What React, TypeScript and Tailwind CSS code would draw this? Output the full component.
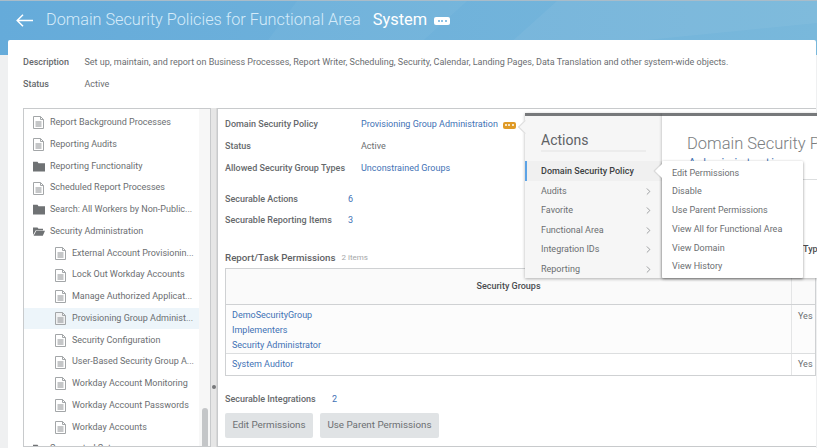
import { ChevronRight } from "lucide-react";
import React from "react";

const DocIcon = ({ filled }: { filled?: boolean }) => (
  <svg width="11" height="13" viewBox="0 0 11 13" className="shrink-0">
    <path
      d="M.5.5h7l3 3v9H.5z"
      fill={filled ? "#f0f1f2" : "#fff"}
      stroke="#a3a6a8"
      strokeWidth="1"
    />
    <path d="M7.5.5v3h3" fill="none" stroke="#a3a6a8" />
    <path d="M2.5 6h6M2.5 8h6M2.5 10h6" stroke="#8b8e91" strokeWidth="1" />
  </svg>
);

const FolderIcon = ({ open }: { open?: boolean }) => (
  <svg width="12" height="11" viewBox="0 0 12 11" className="shrink-0 -mx-[0.5px]">
    {open ? (
      <path d="M0 1.5h4.5l1 1.2H10V4.2H2.8L0 9zM3.3 4.8H12L9.8 9.8H.6z" fill="#6f7274" />
    ) : (
      <path d="M0 .8h4.5l1 1.4H12V10.5H0z" fill="#6f7274" />
    )}
  </svg>
);

const Dots = ({ className }: { className: string }) => (
  <span className={`flex items-center justify-center gap-[1.5px] rounded-[2px] shrink-0 ${className}`}>
    <i className="w-[2px] h-[2px] rounded-full bg-current" />
    <i className="w-[2px] h-[2px] rounded-full bg-current" />
    <i className="w-[2px] h-[2px] rounded-full bg-current" />
  </span>
);

const treeItems = [
  { label: "Report Background Processes", kind: "doc" },
  { label: "Reporting Audits", kind: "doc" },
  { label: "Reporting Functionality", kind: "folder" },
  { label: "Scheduled Report Processes", kind: "doc" },
  { label: "Search: All Workers by Non-Public...", kind: "folder" },
  { label: "Security Administration", kind: "open" },
  { label: "External Account Provisionin...", kind: "doc", child: true },
  { label: "Lock Out Workday Accounts", kind: "doc", child: true },
  { label: "Manage Authorized Applicat...", kind: "doc", child: true },
  { label: "Provisioning Group Administ...", kind: "doc", child: true, active: true },
  { label: "Security Configuration", kind: "doc", child: true },
  { label: "User-Based Security Group A...", kind: "doc", child: true },
  { label: "Workday Account Monitoring", kind: "doc", child: true },
  { label: "Workday Account Passwords", kind: "doc", child: true },
  { label: "Workday Accounts", kind: "doc", child: true },
  { label: "Segmented Setup", kind: "folder" },
];

const menuItems = ["Audits", "Favorite", "Functional Area", "Integration IDs", "Reporting"];
const subItems = [
  "Edit Permissions",
  "Disable",
  "Use Parent Permissions",
  "View All for Functional Area",
  "View Domain",
  "View History",
];

const Tree = () => (
  <div className="w-[188px] h-[339px] shrink-0 border border-[#c8cacc] flex overflow-hidden">
    <div className="w-[175px] pt-[2.5px] shrink-0">
      {treeItems.map((item) => (
        <div
          key={item.label}
          className={`h-[21.75px] flex items-center gap-[6px] whitespace-nowrap ${
            item.child ? "pl-[31px]" : "pl-[9px]"
          } ${item.active ? "bg-[#edf5fa]" : ""}`}
        >
          {item.kind === "doc" && <DocIcon filled={item.active} />}
          {item.kind === "folder" && <FolderIcon />}
          {item.kind === "open" && <FolderIcon open />}
          <span>{item.label}</span>
        </div>
      ))}
    </div>
    <div className="flex-1 bg-[#f7f7f7] flex flex-col justify-end items-center">
      <div className="w-[6px] h-[38px] rounded-t-[3px] bg-[#c4c6c8]" />
    </div>
  </div>
);

const Details = () => (
  <div className="flex-1 min-w-0 h-[339px] border-t border-l border-b border-[#c8cacc] pl-[7px] pt-[5px] overflow-hidden">
    <div className="h-[21.7px] flex items-center">
      <span className="w-[136px] font-medium text-[#66696c]">Domain Security Policy</span>
      <span className="text-[#3f72b5]">Provisioning Group Administration</span>
      <Dots className="ml-[5px] w-[13px] h-[7px] bg-[#df9a27] text-white" />
    </div>
    <div className="h-[21.7px] flex items-center">
      <span className="w-[136px] font-medium text-[#66696c]">Status</span>
      <span>Active</span>
    </div>
    <div className="h-[21.7px] flex items-center">
      <span className="w-[136px] font-medium text-[#66696c]">Allowed Security Group Types</span>
      <span className="text-[#3f72b5]">Unconstrained Groups</span>
    </div>
    <div className="mt-[9px] h-[21.7px] flex items-center">
      <span className="w-[123px] font-medium text-[#66696c]">Securable Actions</span>
      <span className="text-[#3f72b5]">6</span>
    </div>
    <div className="h-[21.7px] flex items-center">
      <span className="w-[123px] font-medium text-[#66696c]">Securable Reporting Items</span>
      <span className="text-[#3f72b5]">3</span>
    </div>
    <div className="mt-[16px] h-[20px] flex items-center gap-[6px]">
      <span className="text-[9.75px] font-medium text-[#5f6265]">Report/Task Permissions</span>
      <span className="text-[8px] text-[#a5a7a9]">2 items</span>
    </div>
    <div className="border border-[#cfd1d3]">
      <div className="flex h-[36.5px] bg-[#fafafa] border-b border-[#cfd1d3]">
        <div className="w-[565px] flex items-center justify-center font-medium text-[#4a4d50]">
          Security Groups
        </div>
        <div className="flex-1 border-l border-[#e4e5e6]" />
      </div>
      <div className="flex h-[49px] border-b border-[#dcdedf] bg-[#fcfcfc]">
        <div className="w-[565px] pl-[6px] pt-[3px] text-[#3f72b5] leading-[15px]">
          <div>DemoSecurityGroup</div>
          <div>Implementers</div>
          <div>Security Administrator</div>
        </div>
        <div className="flex-1 border-l border-[#e4e5e6] pl-[6px] pt-[4px] leading-[15px]">Yes</div>
      </div>
      <div className="flex h-[21px]">
        <div className="w-[565px] pl-[6px] pt-[3px] text-[#3f72b5] leading-[15px]">System Auditor</div>
        <div className="flex-1 border-l border-[#e4e5e6] pl-[6px] pt-[3px] leading-[15px]">Yes</div>
      </div>
    </div>
    <div className="mt-[13.5px] flex items-center h-[20px]">
      <span className="w-[107px] font-medium text-[#66696c]">Securable Integrations</span>
      <span className="text-[#3f72b5]">2</span>
    </div>
    <div className="mt-[3px] flex gap-[7px]">
      <button className="w-[88px] h-[25px] rounded-[2px] bg-[#e0e3e5] text-[9.8px] text-[#6d7073]">Edit Permissions</button>
      <button className="w-[119px] h-[25px] rounded-[2px] bg-[#e0e3e5] text-[9.8px] text-[#6d7073]">Use Parent Permissions</button>
    </div>
  </div>
);

const ActionsMenu = () => (
  <div className="absolute left-[525px] top-[113px] w-[292px] h-[165px] flex">
    <div className="relative w-[137px] h-full bg-[#f6f6f6] border-t-[3px] border-[#77797b] shadow-[0_1px_3px_rgba(0,0,0,0.3)]">
      <div className="absolute -left-[5px] top-[6px] w-[10px] h-[10px] rotate-45 bg-[#f6f6f6] border-l border-b border-[#dddddd]" />
      <div className="relative mx-[16px] mt-[14px] border-b-2 border-[#ececec] text-[14px] text-[#5f6265] leading-[20px]">
        Actions
      </div>
      <div className="relative mt-[9px] h-[20px] pt-[2px] pl-[14px] flex items-center bg-[#f0f0f0] border-l-[2px] border-[#5ca3e6] font-medium text-[#3c3f42]">
        Domain Security Policy
      </div>
      {menuItems.map((m) => (
        <div key={m} className="h-[19.5px] pt-[1px] pl-[16px] pr-[8px] flex items-center justify-between">
          <span>{m}</span>
          <ChevronRight size={11} strokeWidth={1.2} className="text-[#55585b]" />
        </div>
      ))}
    </div>
    <div className="relative flex-1 h-full bg-white border-t-[3px] border-[#77797b] shadow-[0_1px_3px_rgba(0,0,0,0.3)] pl-[25px] pt-[18px] overflow-hidden whitespace-nowrap">
      <div className="text-[16.5px] font-light text-[#7b7e81] leading-[20px]">Domain Security Policy</div>
      <div className="mt-[1px] text-[16.5px] font-light text-[#3f72b5] leading-[20px]">Administration</div>
      <div className="absolute left-0 right-0 top-[63px] border-t border-[#dcdedf]" />
      <div className="absolute left-[141px] top-[127px] font-medium text-[#4a4d50]">Type</div>
    </div>
    <div className="absolute left-[137px] top-[48px] w-[141px] h-[117px] bg-white rounded-[1px] shadow-[0_1px_3px_rgba(0,0,0,0.45)] pl-[10px] pt-[3px] z-10">
      <div className="absolute -left-[5px] top-[5px] w-[10px] h-[10px] rotate-45 bg-white shadow-[-1px_1px_1px_rgba(0,0,0,0.12)]" />
      {subItems.map((s) => (
        <div key={s} className="relative h-[18.75px] flex items-center whitespace-nowrap">
          {s}
        </div>
      ))}
    </div>
  </div>
);

export default function App() {
  return (
    <div
      className="relative w-[817px] h-[448px] overflow-hidden bg-[#eff0f1] text-[9px] text-[#6b6e71]"
      style={{ fontFamily: "Roboto, sans-serif" }}
    >
      <div className="relative h-[55px] border-t border-[#a9bcc9] bg-gradient-to-r from-[#65abda] to-[#79b8db] pl-[16px] pt-[8px] flex items-start">
        <svg className="absolute right-0 top-0" width="560" height="54" viewBox="0 0 560 54">
          <path d="M0 54 40 0h170L150 54z" fill="#fff" opacity="0.04" />
          <path d="M240 54 300 0h260v22z" fill="#fff" opacity="0.05" />
        </svg>
        <svg width="17" height="13" viewBox="0 0 17 13" className="relative mt-[5px]" fill="none" stroke="#fff" strokeWidth="1.5">
          <path d="M7 .8 1.2 6.5 7 12.2M1.2 6.5H17" />
        </svg>
        <span className="relative ml-[13px] text-[16.25px] font-light text-[#d5ebf9] leading-[22px] whitespace-nowrap">
          Domain Security Policies for Functional Area
        </span>
        <span className="relative ml-[12px] text-[16.4px] text-white leading-[22px]">System</span>
        <Dots className="relative ml-[7px] mt-[8px] w-[16px] h-[8px] bg-white text-[#68aedc]" />
      </div>
      <div className="absolute left-[8px] right-[1px] top-[40px] h-[408px] bg-white rounded-t-[2px] pl-[15px] pt-[12px]">
        <div className="h-[21.7px] flex items-center whitespace-nowrap">
          <span className="w-[61.5px] shrink-0 font-medium text-[#66696c]">Description</span>
          <span>
            Set up, maintain, and report on Business Processes, Report Writer, Scheduling, Security, Calendar, Landing
            Pages, Data Translation and other system-wide objects.
          </span>
        </div>
        <div className="h-[21.7px] flex items-center">
          <span className="w-[61.5px] shrink-0 font-medium text-[#66696c]">Status</span>
          <span>Active</span>
        </div>
        <div className="mt-[13px] flex">
          <Tree />
          <div className="relative w-[6px] h-[339px] shrink-0 bg-[#e6e6e6] border-r border-[#d8d8d8]">
            <span className="absolute left-[1px] top-[277px] w-[4px] h-[4px] rounded-full bg-[#77797b]" />
          </div>
          <Details />
        </div>
      </div>
      <ActionsMenu />
    </div>
  );
}
